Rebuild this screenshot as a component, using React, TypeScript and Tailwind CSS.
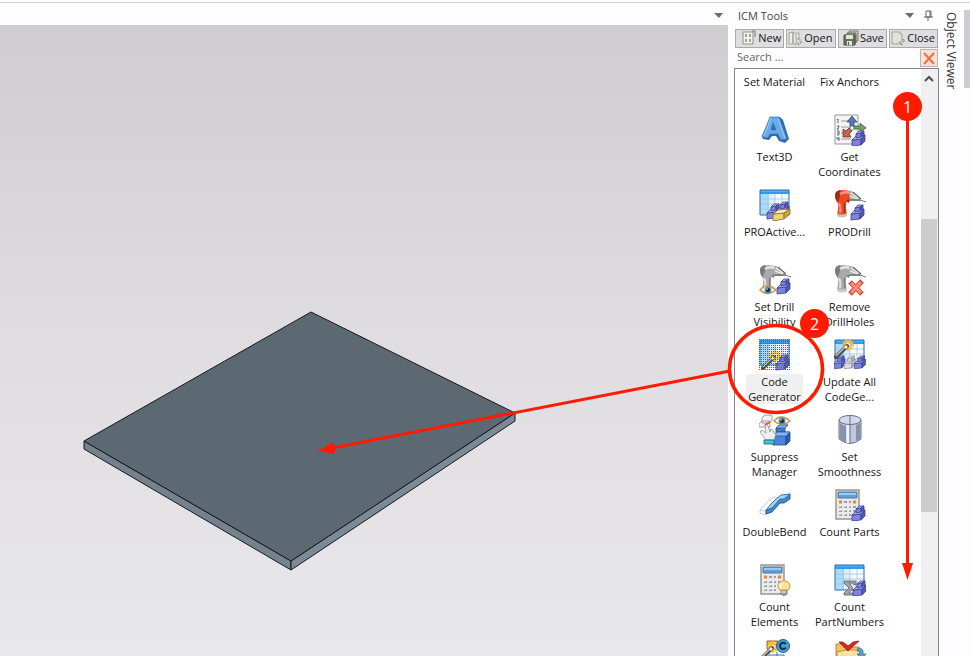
import type { ReactNode } from "react";
import clsx from "clsx";

interface Tool {
  label: string[];
  icon?: ReactNode;
  selected?: boolean;
}

const Cubes = ({ x = 0, y = 0, gray = false }) => {
  const fill = gray ? "#dcdde2" : "#7f84d8";
  const top = gray ? "#fafafa" : "#adb2f4";
  const side = gray ? "#b4b6bc" : "#5559b4";
  const stroke = gray ? "#85878d" : "#3a3f96";
  return (
    <g transform={`translate(${x} ${y})`} stroke={stroke} strokeWidth=".8" strokeLinejoin="round">
      <path d="M0 9l9-1v6l-9 1z" fill={fill} />
      <path d="M0 9l4-4 9-1-4 4z" fill={top} />
      <path d="M9 8l4-4v6l-4 4z" fill={side} />
      <path d="M4 3l5-1v4L4 7z" fill={fill} />
      <path d="M4 3l3-3h5L9 2z" fill={top} />
      <path d="M9 2l3-2v4L9 6z" fill={side} />
    </g>
  );
};

const Grid = () => (
  <g>
    <path d="M1 1h29v25H1z" fill="#f6fbff" />
    <path d="M1 5h9v21H1z" fill="#a9dcfb" />
    <path d="M10 5h6v21h-6z" fill="#d9f0fe" />
    <path d="M9 5v21M16 5v21M23 5v21M1 10h29M1 15h29M1 20h29" stroke="#a6c2da" strokeWidth=".8" fill="none" />
    <path d="M1 1h29v4H1z" fill="#2b9cf0" />
    <path d="M2 2h27" stroke="#73c4fb" />
    <path d="M1 1h29v25H1z" fill="none" stroke="#3569a6" />
  </g>
);

const Drill = ({ red = false }) => {
  const body = red ? "#ea4a26" : "#a9a9ab";
  const light = red ? "#ff9478" : "#e2e2e3";
  const dark = red ? "#9c2c18" : "#7b7b7e";
  return (
    <g strokeLinejoin="round">
      <path d="M3 12q2 4 1 8l-1 5q4 4 10 1l-1-6q-1-4 1-8z" fill={body} />
      <path d="M5 14q2 4 1 10" stroke={light} strokeWidth="2" fill="none" />
      <path d="M11 14q-1 4 0 10" stroke={dark} strokeWidth="1.5" fill="none" />
      <path d="M3 24q5 3 10 0v3q-5 3-10 0z" fill={red ? "#c8bfb9" : "#cacacc"} />
      <path d="M1 6q1-5 8-5l8 1 4 3-2 6-7 2-8 1q-3-3-3-8z" fill={body} />
      <path d="M1 6q0-4 5-5l1 3-3 9q-3-2-3-7z" fill={dark} />
      <path d="M6 5q4-3 10-1" stroke={light} strokeWidth="2.5" fill="none" />
      <path d="M12 12l4-2-1 4z" fill={dark} />
      <path d="M15 2l5 1 7 6v3l-11 0z" fill="#b4b6b6" />
      <path d="M17 4l7 5M16 7l8 3" stroke="#fafafa" />
      <path d="M16 11h10M19 3l8 7" stroke="#4a5050" />
      <path d="M26 11l6 2" stroke="#777b7b" />
    </g>
  );
};

const Wand = ({ x = 0, y = 0 }) => (
  <g transform={`translate(${x} ${y})`}>
    <circle cx="14" cy="6" r="5.5" fill="#ffd062" opacity=".8" />
    <path d="M14 0v12M8 6h12M10 2l8 8M18 2l-8 8" stroke="#f2a51c" />
    <circle cx="14" cy="6" r="2" fill="#fffbe0" />
    <path d="M2 18L13 7" stroke="#4c4c4c" strokeWidth="4" strokeLinecap="round" />
    <path d="M2 17l9-9" stroke="#c4c4bb" strokeWidth="1.5" />
    <path d="M11 9l2-2" stroke="#fff" strokeWidth="2.5" />
  </g>
);

const Calculator = () => (
  <g>
    <path d="M2 1h23v29H2z" fill="#e9eaec" stroke="#94969b" strokeWidth="1.5" />
    <path d="M4 3h19v6H4z" fill="#5f9fdf" stroke="#5b7695" />
    <path d="M5 5h17" stroke="#9acbf4" strokeWidth="2" />
    <path d="M5 13h3M19 13h3" stroke="#f08328" strokeWidth="3" />
    <path d="M10 13h3M15 13h2M5 18h3M10 18h3M15 18h2M19 18h3M5 22h3M10 22h3M15 22h2M19 22h3M5 26h3M10 26h3M15 26h2" stroke="#9c9fa6" strokeWidth="2" />
    <path d="M5 17h2M10 17h2M15 17h1M5 21h2M10 21h2M15 21h1M5 25h2M10 25h2" stroke="#fff" />
  </g>
);

const Eye = ({ x = 0, y = 0 }) => (
  <g transform={`translate(${x} ${y})`}>
    <path d="M0 5q7-8 16 0q-8 7-16 0z" fill="#fff" stroke="#cb9245" strokeWidth="1.5" />
    <circle cx="8" cy="5" r="3.5" fill="#4a8fb0" />
    <circle cx="8" cy="5" r="2" fill="#142938" />
    <circle cx="7" cy="4" r=".8" fill="#fff" />
  </g>
);

const Icon = ({ children }: { children: ReactNode }) => (
  <svg viewBox="0 0 32 32" className="h-8 w-8 shrink-0" aria-hidden="true">
    {children}
  </svg>
);

const tools: Tool[] = [
  {
    label: ["Text3D"],
    icon: (
      <Icon>
        <path d="M12 3h9l3 3 6 19-4 4-6-2-3-5h-4l-3 4-6-1-1-3z" fill="#2c6cae" />
        <path fillRule="evenodd" d="M11 3h9l8 22-6 1-3-6h-8l-2 4-6-1zM14 9l-2 7h5z" fill="#69a9e6" stroke="#3878b8" strokeWidth=".8" />
        <path d="M12 4L5 22M19 5l7 19" stroke="#a4cdf5" />
      </Icon>
    ),
  },
  {
    label: ["Get", "Coordinates"],
    icon: (
      <Icon>
        <path d="M1 1h23v29H1z" fill="#f5f5f5" stroke="#96979b" />
        <path d="M7 7h10M7 13h8M7 19h7M7 25h10" stroke="#969696" />
        <path d="M3 6l1-1v4M3 12h2v1l-2 2h2M3 17h2v4H3M3 19h2M3 23v2h2M5 23v4" stroke="#444" strokeWidth=".8" fill="none" />
        <path d="M18 2l5 6h-3v6h-4V8h-3z" fill="#5578ae" stroke="#2f4674" strokeWidth=".8" />
        <path d="M20 12h6V9l6 5-6 4v-3h-6z" fill="#6da46a" stroke="#386338" strokeWidth=".8" />
        <path d="M15 14l3 3-3 3 2 3h-8v-8l3 2z" fill="#bf6457" stroke="#793029" strokeWidth=".8" />
        <circle cx="18" cy="14" r="2" fill="#fff" stroke="#666" strokeWidth=".7" />
        <Cubes x={18} y={17} />
      </Icon>
    ),
  },
  {
    label: ["PROActive..."],
    icon: (
      <Icon>
        <Grid />
        <Cubes x={8} y={15} />
        <Cubes x={17} y={13} />
        <path d="M14 25l11-1v6l-11 2z" fill="#f0d070" stroke="#8a6c2a" strokeWidth=".8" />
        <path d="M14 25l5-4 12-1-6 4z" fill="#fff2b5" stroke="#8a6c2a" strokeWidth=".8" />
        <path d="M25 24l6-4v5l-6 5z" fill="#cda23e" stroke="#8a6c2a" strokeWidth=".8" />
      </Icon>
    ),
  },
  { label: ["PRODrill"], icon: <Icon><Drill red /><Cubes x={17} y={16} /></Icon> },
  { label: ["Set Drill", "Visibility"], icon: <Icon><Drill /><Cubes x={18} y={15} /><Eye x={1} y={21} /></Icon> },
  {
    label: ["Remove", "DrillHoles"],
    icon: (
      <Icon>
        <Drill />
        <path d="M16 18l12 12M28 17L16 30" stroke="#c4473a" strokeWidth="5" />
        <path d="M17 19l10 10M27 18L17 29" stroke="#ff8a77" strokeWidth="3.2" />
      </Icon>
    ),
  },
  {
    label: ["Code", "Generator"],
    selected: true,
    icon: (
      <Icon>
        <defs>
          <pattern id="selection" width="2" height="2" patternUnits="userSpaceOnUse">
            <path d="M0 0h1v1H0z" fill="#0078d7" />
          </pattern>
        </defs>
        <Grid />
        <Wand x={2} y={11} />
        <Cubes x={17} y={16} />
        <path d="M0 0h31v31H0z" fill="url(#selection)" />
      </Icon>
    ),
  },
  {
    label: ["Update All", "CodeGe..."],
    icon: (
      <Icon>
        <Grid />
        <Wand />
        <g transform="translate(0 17) scale(.85)">
          <Cubes x={0} />
          <Cubes x={12} gray />
          <Cubes x={24} />
        </g>
      </Icon>
    ),
  },
  {
    label: ["Suppress", "Manager"],
    icon: (
      <Icon>
        <path d="M3 4l3-3h7v5l-3 3H3zM0 10l3-3h8v6H0z" fill="#f4f4f4" stroke="#888" strokeWidth=".8" />
        <path d="M17 14l3-3h9l-3 3v6h-9z" fill="#4177c6" stroke="#1e4890" strokeWidth=".8" />
        <path d="M14 22l4-4h13l-4 4v9H14z" fill="#4b84d6" stroke="#1e4890" strokeWidth=".8" />
        <path d="M27 22l4-4v9l-4 4z" fill="#2b5bab" stroke="#1e4890" strokeWidth=".8" />
        <path d="M17 14l3-3h9l-3 3zM14 22l4-4h13l-4 4z" fill="#83b1f2" stroke="#285bab" strokeWidth=".8" />
        <Eye x={15} y={2} />
        <path d="M7 26l-6-8 2-2 4 3-1-8q2-2 3 1l2 6 1-3 2 1 1 3 2 1-2 6z" fill="#efefef" stroke="#8b8b8b" strokeWidth=".8" />
        <path d="M5 26h10v4H5z" fill="#49c2d8" stroke="#17636f" strokeWidth=".8" />
        <path d="M6 11l5-3" stroke="#e4573c" strokeWidth="2" />
      </Icon>
    ),
  },
  {
    label: ["Set", "Smoothness"],
    icon: (
      <Icon>
        <path d="M5 6q11-9 22 0v19q-11 9-22 0z" fill="#c2c8db" stroke="#6b7188" />
        <path d="M6 9q3 3 6 3v16q-4 0-6-3z" fill="#8992ac" />
        <path d="M14 11v18" stroke="#eff3fb" strokeWidth="3" />
        <path d="M22 11l4-2v16l-4 2z" fill="#8790aa" />
        <ellipse cx="16" cy="6" rx="11" ry="4.5" fill="#d4daea" stroke="#6b7188" />
        <path d="M16 2v27" stroke="#6b7188" />
      </Icon>
    ),
  },
  {
    label: ["DoubleBend"],
    icon: (
      <Icon>
        <path d="M1 21l8-9 6-4 7 1-9 10-6 3zM1 21v3l6 2v-4M7 22l9-10" fill="#fafcff" stroke="#b3c1da" strokeWidth=".8" />
        <path d="M7 21l6-2 8-11 10-3v5l-6 4h-4l-8 9-6 2z" fill="#4489cf" stroke="#1d5192" strokeWidth=".9" />
        <path d="M7 21l5-6 4-4 6-5 9-1-6 5h-4l-8 9z" fill="#a5d4fb" stroke="#2c68a8" strokeWidth=".9" />
      </Icon>
    ),
  },
  { label: ["Count Parts"], icon: <Icon><Calculator /><Cubes x={18} y={17} /></Icon> },
  {
    label: ["Count", "Elements"],
    icon: (
      <Icon>
        <Calculator />
        <path d="M22 26h6v4q-3 3-6 0z" fill="#a4a5a9" stroke="#77787d" />
        <path d="M21 26q-4-5 0-8 4-3 8 0 4 4 0 8z" fill="#ffe393" stroke="#c39d4c" />
        <path d="M23 19q-3 2-1 5" stroke="#fffbd5" strokeWidth="2" fill="none" />
        <path d="M22 28h5" stroke="#eee" />
      </Icon>
    ),
  },
  {
    label: ["Count", "PartNumbers"],
    icon: (
      <Icon>
        <Grid />
        <path d="M10 17h12v4h-2l-1-2h-4l4 5-4 5h5l2-3h1v5H10v-2l5-5-5-5z" fill="#a2a4ab" stroke="#5e626b" strokeWidth=".8" />
        <Cubes x={19} y={17} />
      </Icon>
    ),
  },
  {
    label: [],
    icon: (
      <Icon>
        <path d="M8 2h11v8H8z" fill="#f4bb34" stroke="#8c631c" />
        <Wand y={2} />
        <path d="M10 19v-3h15v3M18 13v5" stroke="#2f72b0" fill="none" />
        <path d="M7 18h8v9H7zM20 18h9v9h-9z" fill="#e3f3ff" stroke="#24629d" />
        <circle cx="24" cy="7" r="6.5" fill="#4b9dd6" stroke="#1d5f92" />
        <path d="M27 5q-4-3-6 1 0 6 6 3" fill="none" stroke="#12334e" strokeWidth="2" />
      </Icon>
    ),
  },
  {
    label: [],
    icon: (
      <Icon>
        <path d="M2 5h8l3 3h12v20H2z" fill="#f4bf66" stroke="#c08638" />
        <path d="M3 13l9-2h14l-3 17H3z" fill="#ffe1a0" stroke="#c38c38" />
        <path d="M5 3l9 9L25 2l-6 1-5 4-5-4z" fill="#d92a20" stroke="#951c1a" strokeWidth=".8" />
        <path d="M24 9q6 0 5 6h3l-4 5-5-5h3q0-3-3-3z" fill="#5f9fcb" stroke="#3b749e" strokeWidth=".8" />
      </Icon>
    ),
  },
];

const NewIcon = () => (
  <svg viewBox="0 0 16 16" className="h-4 w-4" aria-hidden="true">
    <path d="M2 2h10v12H2z" fill="#f3f3ee" stroke="#8f9189" />
    <path d="M4 4h2v3H4zM8 4h2v3H8zM4 9h2v3H4zM8 9h2v3H8z" fill="#a0a29b" />
    <path d="M11 1h3v6" stroke="#777" fill="none" />
  </svg>
);

const OpenIcon = () => (
  <svg viewBox="0 0 16 16" className="h-4 w-4" aria-hidden="true">
    <path d="M2 3l4-1v12H2zM6 2l3 2v11l-3-2zM9 3h3v7" fill="#eeeee7" stroke="#a0a19a" />
    <path d="M10 9h3v3h2l-4 3v-3" fill="#e7e7db" stroke="#999a8d" />
  </svg>
);

const SaveIcon = () => (
  <svg viewBox="0 0 16 16" className="h-4 w-4" aria-hidden="true">
    <path d="M6 1h9v10H6z" fill="#d5d7cc" stroke="#727667" />
    <path d="M4 3h9v10H4z" fill="#a6aa98" stroke="#606553" />
    <path d="M1 5h11v10H1z" fill="#67705a" stroke="#4b523e" />
    <path d="M3 5h7v4H3zM4 11h5v4H4z" fill="#e2e5d9" />
    <path d="M5 12h1v3H5z" fill="#535b47" />
  </svg>
);

const CloseIcon = () => (
  <svg viewBox="0 0 16 16" className="h-4 w-4" aria-hidden="true">
    <path d="M2 2h8v2h2v8H9v2H2z" fill="#e2e2dc" stroke="#a2a39b" />
    <path d="M12 9q3 0 2 3h-1M12 13l-2 1 3 1" fill="none" stroke="#929685" />
  </svg>
);

const actions = [
  { name: "New", icon: <NewIcon /> },
  { name: "Open", icon: <OpenIcon /> },
  { name: "Save", icon: <SaveIcon /> },
  { name: "Close", icon: <CloseIcon /> },
];

const Caret = () => (
  <svg viewBox="0 0 10 6" className="h-[6px] w-[10px]" aria-hidden="true">
    <path d="M0 0h9L5 5z" fill="#6c6c6c" />
  </svg>
);

const ToolItem = ({ label, icon, selected }: Tool) => (
  <button className="flex h-[75px] w-[75px] flex-col items-center text-[11px] leading-[15px] text-[#151515]">
    {icon ?? <span className="h-8" />}
    <span
      className={clsx(
        "mt-[3px] flex flex-col items-center whitespace-nowrap",
        selected && "bg-[#f0f0f0] px-[2px]",
      )}
    >
      {label.map((line) => (
        <span key={line}>{line}</span>
      ))}
    </span>
  </button>
);

const Plate = () => (
  <svg viewBox="0 0 728 631" preserveAspectRatio="xMinYMin meet" className="h-full w-full" aria-hidden="true">
    <g stroke="#15191e" strokeLinejoin="round">
      <path d="M84 416l207 120v9L84 424z" fill="#75828d" />
      <path d="M291 536l224-148v8L291 545z" fill="#7d8a96" />
      <path d="M311 287l204 101-224 148L84 416z" fill="#5c6872" />
    </g>
  </svg>
);

const badge =
  "absolute flex h-[29px] w-[29px] items-center justify-center rounded-full bg-[#ff1a00] text-base text-white";

const Annotations = () => (
  <div className="pointer-events-none absolute top-0 right-0 h-[656px] w-[970px]">
    <svg viewBox="0 0 970 656" className="h-full w-full" aria-hidden="true">
      <ellipse cx="776" cy="369" rx="46.5" ry="43.5" fill="none" stroke="#ff1a00" strokeWidth="3.5" />
      <path d="M730 371L332 448" stroke="#ff1a00" strokeWidth="3" />
      <path d="M317 451l16-9 2 12z" fill="#ff1a00" />
      <path d="M907.5 120v446" stroke="#ff1a00" strokeWidth="3" />
      <path d="M902 563h11l-5.500 17z" fill="#ff1a00" />
    </svg>
    <span className={clsx(badge, "top-[92px] left-[893px]")}>1</span>
    <span className={clsx(badge, "top-[309px] left-[800px]")}>2</span>
  </div>
);

const App = () => {
  return (
    <div className="relative flex h-screen flex-col overflow-hidden bg-[#fdfcfe] font-['Open_Sans','Noto_Sans',sans-serif] text-[11px]">
      <div className="h-[3px] shrink-0 border-b border-[#d0d0d2]" />

      <div className="flex min-h-0 flex-1">
        <main className="flex min-w-0 flex-1 flex-col">
          <div className="flex h-[22px] shrink-0 items-center justify-end pt-1 pr-1">
            <button aria-label="Views">
              <Caret />
            </button>
          </div>
          <div className="min-h-0 flex-1 bg-linear-to-b from-[#cfcdd0] via-[#dfdde0] to-[#e8e7eb]">
            <Plate />
          </div>
        </main>

        <aside className="ml-[6px] flex w-[205px] shrink-0 flex-col">
          <header className="flex h-[26px] shrink-0 items-center gap-2 pr-1 pl-1 text-[#444]">
            <h1 className="flex-1">ICM Tools</h1>
            <button aria-label="Panel options">
              <Caret />
            </button>
            <button aria-label="Pin panel">
              <svg viewBox="0 0 12 12" className="h-3 w-3" aria-hidden="true">
                <path d="M3 1h5v6H3zM1 7h9M5 7v4M7 1v6" fill="none" stroke="#666" />
              </svg>
            </button>
          </header>

          <div className="grid h-[18px] shrink-0 grid-cols-4 gap-[2px] pr-px pl-px">
            {actions.map((action) => (
              <button
                key={action.name}
                className="flex items-center justify-end gap-px border border-[#aaa] bg-[#dedde0] pr-[2px] text-[#151515]"
              >
                {action.icon}
                <span>{action.name}</span>
              </button>
            ))}
          </div>

          <div className="flex h-[21px] shrink-0 items-start pt-[2px] pr-px">
            <input
              aria-label="Search"
              placeholder="Search ..."
              className="h-4 min-w-0 flex-1 bg-transparent pl-[3px] outline-none placeholder:text-[#666]"
            />
            <button aria-label="Clear search" className="flex h-[18px] w-[18px] items-center justify-center border border-[#bcb5ae] bg-[#f2e5d8]">
              <svg viewBox="0 0 14 14" className="h-[14px] w-[14px]" aria-hidden="true">
                <path d="M2 2l10 11M12 2L2 13" stroke="#f46a43" strokeWidth="2" />
              </svg>
            </button>
          </div>

          <div className="flex min-h-0 flex-1 border border-b-0 border-[#83848a] bg-white">
            <div className="min-w-0 flex-1 overflow-hidden pl-[2px]">
              <div className="-mt-[30px] grid grid-cols-[75px_75px]">
                <ToolItem label={["Set Material"]} />
                <ToolItem label={["Fix Anchors"]} />
                {tools.map((tool, index) => (
                  <ToolItem key={index} {...tool} />
                ))}
              </div>
            </div>
            <div className="flex w-[17px] shrink-0 flex-col bg-[#f0eff1] pr-px">
              <button aria-label="Scroll up" className="flex h-[20px] items-center justify-center">
                <svg viewBox="0 0 10 8" className="h-2 w-[10px]" aria-hidden="true">
                  <path d="M1 6l4-4 4 4" fill="none" stroke="#505050" strokeWidth="2" />
                </svg>
              </button>
              <div className="mt-[130px] h-[293px] bg-[#cdccce]" />
            </div>
          </div>
        </aside>

        <div className="flex w-[31px] shrink-0 items-start justify-between pt-[7px] pl-1">
          <button className="pt-[2px] text-xs text-[#333] [writing-mode:vertical-rl]">Object Viewer</button>
          <div className="h-[78px] w-[6px] bg-[#cdccd0]" />
        </div>
      </div>

      <Annotations />
    </div>
  );
};

export default App;
